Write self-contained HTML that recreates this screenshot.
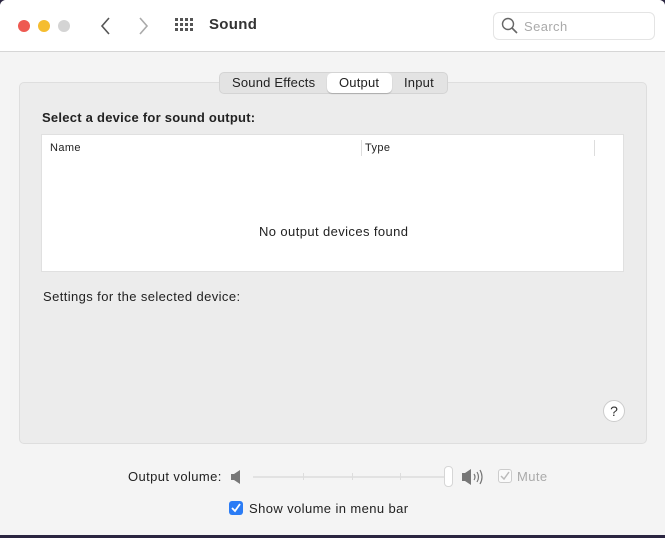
<!DOCTYPE html>
<html><head><style>
*{margin:0;padding:0;box-sizing:border-box}
body{width:665px;height:538px;background:#2a2540;font-family:"Liberation Sans",sans-serif;overflow:hidden;position:relative}
.win{position:absolute;left:0;top:0;width:665px;height:535px;background:#f4f4f4;border-radius:6px 6px 0 0;overflow:hidden}
.tb{position:absolute;left:0;top:0;width:665px;height:52px;background:#fff;border-bottom:1px solid #d6d6d6}
.dot{position:absolute;top:20px;width:12px;height:12px;border-radius:50%}
.t{position:absolute;font-size:13px;color:#222;white-space:nowrap;letter-spacing:0.4px}
</style></head><body>
<div class="win">
<div class="tb">
<div class="dot" style="left:18px;background:#ee5a52"></div>
<div class="dot" style="left:38px;background:#f5bd30"></div>
<div class="dot" style="left:58px;background:#d4d4d4"></div>
<svg style="position:absolute;left:100px;top:16px" width="12" height="20"><path d="M9 2L2 10L9 18" stroke="#555" stroke-width="1.6" fill="none"/></svg>
<svg style="position:absolute;left:137px;top:16px" width="12" height="20"><path d="M3 2L10 10L3 18" stroke="#aaa" stroke-width="1.6" fill="none"/></svg>
<svg style="position:absolute;left:175px;top:18px" width="20" height="16" fill="#555">
<g><rect x="0" y="0" width="3" height="3"/><rect x="5" y="0" width="3" height="3"/><rect x="10" y="0" width="3" height="3"/><rect x="15" y="0" width="3" height="3"/>
<rect x="0" y="5" width="3" height="3"/><rect x="5" y="5" width="3" height="3"/><rect x="10" y="5" width="3" height="3"/><rect x="15" y="5" width="3" height="3"/>
<rect x="0" y="10" width="3" height="3"/><rect x="5" y="10" width="3" height="3"/><rect x="10" y="10" width="3" height="3"/><rect x="15" y="10" width="3" height="3"/></g></svg>
<div class="t" style="left:209px;top:16px;font-size:15px;font-weight:bold;color:#333;letter-spacing:0.3px">Sound</div>
<div style="position:absolute;left:493px;top:12px;width:162px;height:28px;border:1px solid #e4e4e4;border-radius:6px;background:#fff"></div>
<svg style="position:absolute;left:501px;top:17px" width="18" height="18"><circle cx="7" cy="7" r="5.5" stroke="#666" stroke-width="1.4" fill="none"/><path d="M11 11L16 16" stroke="#666" stroke-width="1.6"/></svg>
<div class="t" style="left:524px;top:19px;color:#aaa">Search</div>
</div>
<div style="position:absolute;left:19px;top:82px;width:628px;height:362px;background:#ececec;border:1px solid #dedede;border-radius:5px"></div>
<div style="position:absolute;left:219px;top:72px;width:229px;height:22px;background:#e3e3e3;border:1px solid #d4d4d4;border-radius:5px"></div>
<div style="position:absolute;left:327px;top:73px;width:65px;height:20px;background:#fff;border-radius:5px;box-shadow:0 1px 1px rgba(0,0,0,.2)"></div>
<div class="t" style="left:232px;top:75px;letter-spacing:0.2px">Sound Effects</div>
<div class="t" style="left:339px;top:75px;letter-spacing:0.2px">Output</div>
<div class="t" style="left:404px;top:75px;letter-spacing:0.2px">Input</div>
<div class="t" style="left:42px;top:110px;font-weight:bold;letter-spacing:0.25px">Select a device for sound output:</div>
<div style="position:absolute;left:41px;top:134px;width:583px;height:138px;background:#fff;border:1px solid #e0e0e0"></div>
<div class="t" style="left:50px;top:142px;font-size:11px">Name</div>
<div class="t" style="left:365px;top:142px;font-size:11px">Type</div>
<div style="position:absolute;left:361px;top:140px;width:1px;height:16px;background:#ddd"></div>
<div style="position:absolute;left:594px;top:140px;width:1px;height:16px;background:#ddd"></div>
<div class="t" style="left:259px;top:224px">No output devices found</div>
<div class="t" style="left:43px;top:289px">Settings for the selected device:</div>
<div style="position:absolute;left:603px;top:400px;width:22px;height:22px;border-radius:50%;background:#fff;border:1px solid #ccc;text-align:center;font-size:14px;line-height:20px;color:#333">?</div>
<div class="t" style="left:128px;top:469px">Output volume:</div>
<svg style="position:absolute;left:230px;top:469px" width="14" height="16"><path d="M1 5H4L10 1V15L4 11H1Z" fill="#777"/></svg>
<div style="position:absolute;left:253px;top:476px;width:195px;height:2px;background:#e2e2e2"></div>
<div style="position:absolute;left:303px;top:473px;width:1px;height:7px;background:#ddd"></div>
<div style="position:absolute;left:352px;top:473px;width:1px;height:7px;background:#ddd"></div>
<div style="position:absolute;left:400px;top:473px;width:1px;height:7px;background:#ddd"></div>
<div style="position:absolute;left:444px;top:466px;width:9px;height:21px;background:#fff;border:1px solid #d6d6d6;border-radius:4px"></div>
<svg style="position:absolute;left:461px;top:468px" width="24" height="18"><path d="M1 5H4L10 1V17L4 13H1Z" fill="#777"/><path d="M13 6Q15 9 13 12M16 4Q19 9 16 14M19 2Q23 9 19 16" stroke="#777" stroke-width="1.2" fill="none"/></svg>
<div style="position:absolute;left:498px;top:469px;width:14px;height:14px;border:1px solid #ccc;border-radius:3px;background:#fafafa"></div>
<svg style="position:absolute;left:499px;top:470px" width="12" height="12"><path d="M2 6L5 9L10 2" stroke="#bbb" stroke-width="1.5" fill="none"/></svg>
<div class="t" style="left:517px;top:469px;color:#aaa">Mute</div>
<div style="position:absolute;left:229px;top:501px;width:14px;height:14px;border-radius:3px;background:#2b7cf5"></div>
<svg style="position:absolute;left:230px;top:502px" width="12" height="12"><path d="M2 6L5 9L10 2" stroke="#fff" stroke-width="1.8" fill="none"/></svg>
<div class="t" style="left:249px;top:501px">Show volume in menu bar</div>
</div>
</body></html>
